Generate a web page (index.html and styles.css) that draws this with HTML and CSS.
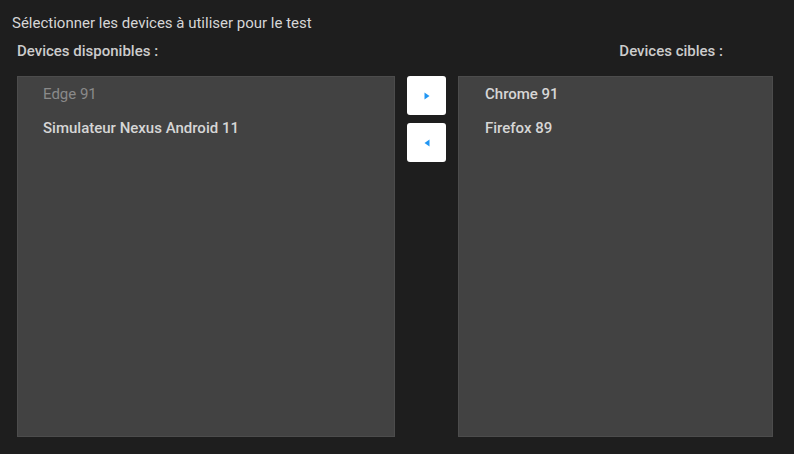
FILE: index.html
```html
<html lang="en">
<head>
    <meta charset="UTF-8">
    <meta name="viewport" content="width=device-width, initial-scale=1.0">
    <title>Sélection des devices</title>
    <link rel="stylesheet" href="styles.css">
</head>
<body>
    <div class="picker">
        <div class="picker-title">Sélectionner les devices à utiliser pour le test</div>
        <div class="picker-headers">
            <span class="header-left">Devices disponibles :</span>
            <span class="header-right">Devices cibles :</span>
        </div>
        <div class="picker-body">
            <ul class="device-list list-left">
                <li class="device disabled">Edge 91</li>
                <li class="device">Simulateur Nexus Android 11</li>
            </ul>
            <div class="move-buttons">
                <button type="button" class="move-btn">
                    <svg width="6" height="8" viewBox="0 0 6 8"><polygon points="0.5,0.5 5.5,4 0.5,7.5" fill="#2196f3"/></svg>
                </button>
                <button type="button" class="move-btn">
                    <svg width="6" height="8" viewBox="0 0 6 8"><polygon points="5.5,0.5 0.5,4 5.5,7.5" fill="#2196f3"/></svg>
                </button>
            </div>
            <ul class="device-list list-right">
                <li class="device">Chrome 91</li>
                <li class="device">Firefox 89</li>
            </ul>
        </div>
    </div>
</body>
</html>
```

FILE: styles.css
```css
body
{
    margin: 0;
    background: #1e1e1e;
    font-family: Roboto, "Liberation Sans", sans-serif;
    font-size: 15px;
    color: #e0e0e0;
}
.picker
{
    padding: 13px 0 0 12px;
}
.picker-title
{
    line-height: 20px;
    color: #d6d6d6;
}
.picker-headers
{
    display: flex;
    width: 706px;
    justify-content: space-between;
    padding: 8px 0 0 5px;
    line-height: 20px;
    font-weight: 500;
    color: #cccccc;
}
.picker-body
{
    display: flex;
    gap: 12px;
    margin: 15px 0 0 5px;
}
.device-list
{
    list-style: none;
    margin: 0;
    padding: 0;
    height: 359px;
    background: #424242;
    border: 1px solid #4c4c4c;
}
.list-left
{
    width: 376px;
}
.list-right
{
    width: 313px;
}
.device
{
    height: 34px;
    line-height: 34px;
    padding-left: 25px;
    font-weight: 500;
    color: #d6d6d6;
}
.list-right .device
{
    padding-left: 26px;
}
.device.disabled
{
    font-weight: 400;
    color: #8a8a8a;
}
.move-buttons
{
    display: flex;
    flex-direction: column;
    gap: 8px;
}
.move-btn
{
    width: 39px;
    height: 39px;
    padding: 0;
    border: none;
    border-radius: 3px;
    background: #fff;
    display: flex;
    align-items: center;
    justify-content: center;
}
```
